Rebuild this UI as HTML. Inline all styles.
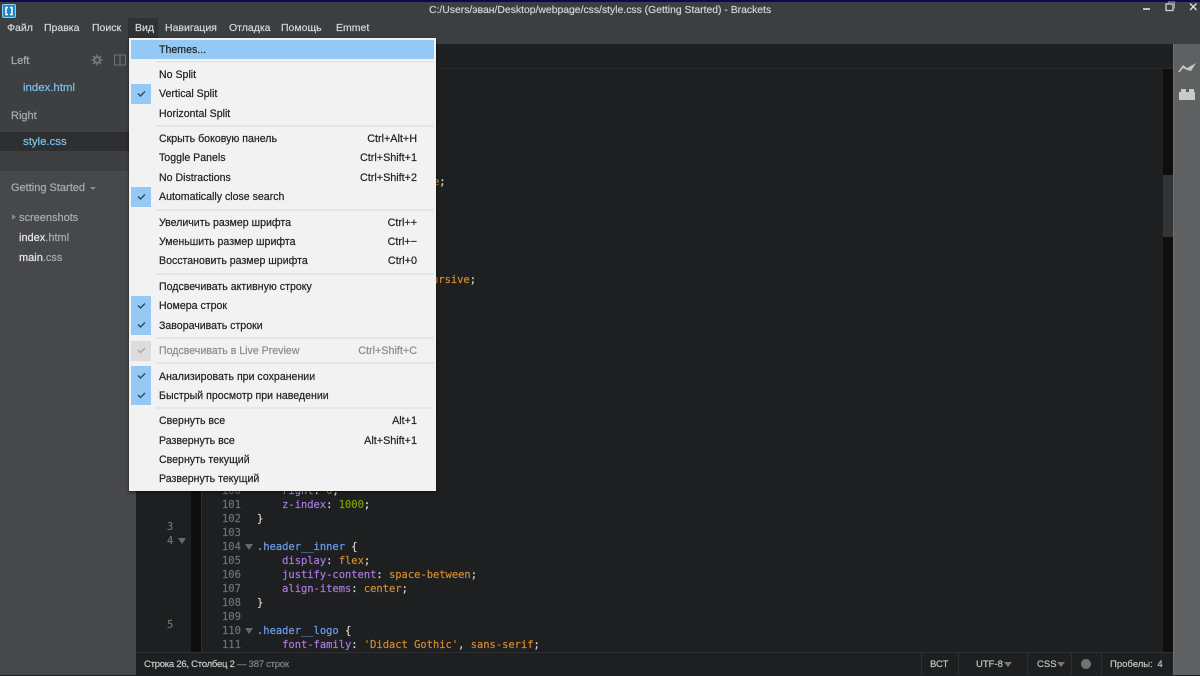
<!DOCTYPE html>
<html><head><meta charset="utf-8"><style>
*{box-sizing:border-box}
html,body{margin:0;padding:0}
body{width:1200px;height:675px;overflow:hidden;position:relative;background:#1d1f21;font-family:"Liberation Sans",sans-serif;font-size:11px}
.a{position:absolute;white-space:nowrap}
.t{position:absolute;white-space:nowrap;line-height:14px;margin-top:1px;-webkit-text-stroke:.2px}
.m{color:#d4d6d6;top:20px;font-size:10.5px}
.s{color:#a9adaf}
.mi{position:absolute;left:159px;color:#222;line-height:14px;white-space:nowrap;font-size:10.6px;margin-top:1px;-webkit-text-stroke:.2px}
.sc{position:absolute;right:783px;color:#222;line-height:14px;white-space:nowrap;font-size:10.8px;margin-top:1px;-webkit-text-stroke:.2px}
.sep{position:absolute;left:156px;width:278px;height:2px;background:#e6e6e6}
.ck{position:absolute;left:131px;width:20px;background:#94c9f6}
.code{position:absolute;font-family:"DejaVu Sans Mono","Liberation Mono",monospace;font-size:10.45px;line-height:14px;white-space:pre;color:#d5d7d6;margin-top:1px;-webkit-text-stroke:.2px}
.n{color:#6f7172}.p{color:#a87bdc}.v{color:#d48a2e}.g{color:#7f9f00}.h{color:#6a9ff0}
.st{position:absolute;top:652px;height:23px;line-height:23px;color:#c9cbcc;font-size:9.5px;white-space:nowrap;margin-top:1px;-webkit-text-stroke:.15px}
.bar{position:absolute;top:652px;width:1px;height:23px;background:#2e2f31}
</style></head><body>
<div class="a" style="left:0;top:0;width:1200px;height:44px;background:#3c3f41"></div>
<div class="a" style="left:0;top:0;width:1200px;height:2px;background:#10084f"></div>
<svg class="a" style="left:2px;top:4px" width="14" height="14" viewBox="0 0 14 14"><rect x="0.5" y="0.5" width="13" height="13" rx="1.5" fill="#1f86c8" stroke="#8fd0f4"/><path d="M6 3.5H4V10.500H6M8 3.5H10V10.500H8" fill="none" stroke="#fff" stroke-width="1.500"/></svg>
<div class="t" style="left:429px;top:3px;color:#d0d2d3;font-size:10.4px">C:/Users/эван/Desktop/webpage/css/style.css (Getting Started) - Brackets</div>
<div class="a" style="left:128px;top:18px;width:30px;height:20px;background:#303235"></div>
<div class="t m" style="left:7px">Файл</div>
<div class="t m" style="left:44px">Правка</div>
<div class="t m" style="left:92px">Поиск</div>
<div class="t m" style="left:135px">Вид</div>
<div class="t m" style="left:165px">Навигация</div>
<div class="t m" style="left:229px">Отладка</div>
<div class="t m" style="left:281px">Помощь</div>
<div class="t m" style="left:336px">Emmet</div>
<svg class="a" style="left:1140px;top:0" width="60" height="14" viewBox="0 0 60 14"><path d="M3 9H10" stroke="#e4e4e4" stroke-width="1.600"/><rect x="26" y="4" width="7" height="6.500" fill="none" stroke="#cfcfcf" stroke-width="1.300"/><path d="M28.500 3.500V2H34.500V8H33.500" fill="none" stroke="#9a9a9a"/><path d="M50 3.500L56.500 10M56.500 3.500L50 10" stroke="#e4e4e4" stroke-width="1.300"/></svg>

<div class="a" style="left:0;top:44px;width:136px;height:631px;background:#47484b"></div>
<div class="a" style="left:0;top:44px;width:136px;height:127px;background:#3d3f41"></div>
<div class="a" style="left:0;top:132px;width:136px;height:19px;background:#2e2f31"></div>
<div class="t s" style="left:11px;top:53px">Left</div>
<div class="t s" style="left:11px;top:108px">Right</div>
<div class="t" style="left:23px;top:80px;color:#78c3ec;font-size:11.4px">index.html</div>
<div class="t" style="left:23px;top:134px;color:#78c3ec;font-size:11.4px">style.css</div>
<svg class="a" style="left:91px;top:54px" width="12" height="12" viewBox="0 0 12 12"><circle cx="6" cy="6" r="2.800" fill="none" stroke="#75787a" stroke-width="2"/><path d="M6 .5V3M6 9V11.500M.5 6H3M9 6H11.500M2 2L3.800 3.800M8.200 8.200L10 10M2 10L3.800 8.200M8.200 3.800L10 2" stroke="#75787a" stroke-width="1.500"/></svg>
<svg class="a" style="left:114px;top:54px" width="12" height="12" viewBox="0 0 12 12"><path d="M.5 1H11.500V11H.5ZM6 1V11" fill="none" stroke="#6f7274"/></svg>
<div class="t s" style="left:11px;top:180px;color:#a9adaf">Getting Started</div>
<div class="a" style="left:90px;top:187px;border:3px solid transparent;border-top:3px solid #8b8e90"></div>
<div class="a" style="left:12px;top:214px;border:3.500px solid transparent;border-left:4px solid #85888a"></div>
<div class="t s" style="left:19px;top:210px">screenshots</div>
<div class="t" style="left:19px;top:230px;color:#e8e9e9">index<span class="s">.html</span></div>
<div class="t" style="left:19px;top:250px;color:#e8e9e9">main<span class="s">.css</span></div>

<div class="a" style="left:136px;top:44px;width:1037px;height:608px;background:#1d1f21"></div>
<div class="a" style="left:136px;top:68px;width:1037px;height:1px;background:#26282a"></div>
<div class="a" style="left:191px;top:69px;width:10px;height:583px;background:#0e0e0e"></div>
<div class="a" style="left:201px;top:69px;width:1px;height:583px;background:#2b2d2f"></div>
<div class="a" style="left:1163px;top:69px;width:10px;height:583px;background:#0e0e0e"></div>
<div class="a" style="left:1163px;top:175px;width:10px;height:62px;background:#333435"></div>
<div class="a" style="left:1173px;top:44px;width:27px;height:631px;background:#5f6061;border-left:1px solid #6e6f70"></div>
<svg class="a" style="left:1177px;top:60px" width="20" height="14" viewBox="0 0 20 14"><path d="M1 12L6 5L10 8L19 3L14 11L10 10L6 8L3 12Z" fill="#c5c6c6"/></svg>
<svg class="a" style="left:1178px;top:87px" width="18" height="14" viewBox="0 0 18 14"><path d="M1 13V5H3V2H8V5H11V2H16V5H17V13Z" fill="#c9caca"/></svg>

<div class="code n" style="left:167px;top:519px">3</div>
<div class="code n" style="left:167px;top:533px">4</div>
<div class="a" style="left:178px;top:538px;border:4px solid transparent;border-top:6px solid #666869;border-bottom:0"></div>
<div class="code n" style="left:167px;top:617px">5</div>

<div class="code n" style="left:222px;top:483px">100</div>
<div class="code" style="left:257px;top:483px">    <span class="p">right</span>: <span class="g">0</span>;</div>
<div class="code n" style="left:222px;top:497px">101</div>
<div class="code" style="left:257px;top:497px">    <span class="p">z-index</span>: <span class="g">1000</span>;</div>
<div class="code n" style="left:222px;top:511px">102</div>
<div class="code" style="left:257px;top:511px">}</div>
<div class="code n" style="left:222px;top:525px">103</div>
<div class="code n" style="left:222px;top:539px">104</div>
<div class="a" style="left:245px;top:544px;border:4px solid transparent;border-top:6px solid #666869;border-bottom:0"></div>
<div class="code" style="left:257px;top:539px"><span class="h">.header__inner</span> {</div>
<div class="code n" style="left:222px;top:553px">105</div>
<div class="code" style="left:257px;top:553px">    <span class="p">display</span>: <span class="v">flex</span>;</div>
<div class="code n" style="left:222px;top:567px">106</div>
<div class="code" style="left:257px;top:567px">    <span class="p">justify-content</span>: <span class="v">space-between</span>;</div>
<div class="code n" style="left:222px;top:581px">107</div>
<div class="code" style="left:257px;top:581px">    <span class="p">align-items</span>: <span class="v">center</span>;</div>
<div class="code n" style="left:222px;top:595px">108</div>
<div class="code" style="left:257px;top:595px">}</div>
<div class="code n" style="left:222px;top:609px">109</div>
<div class="code n" style="left:222px;top:623px">110</div>
<div class="a" style="left:245px;top:628px;border:4px solid transparent;border-top:6px solid #666869;border-bottom:0"></div>
<div class="code" style="left:257px;top:623px"><span class="h">.header__logo</span> {</div>
<div class="code n" style="left:222px;top:637px">111</div>
<div class="code" style="left:257px;top:637px">    <span class="p">font-family</span>: <span class="v">'Didact Gothic'</span>, <span class="v">sans-serif</span>;</div>
<div class="code" style="left:433px;top:174px"><span class="v">e</span>;</div>
<div class="code" style="left:432px;top:272px"><span class="v">ursive</span>;</div>

<div class="a" style="left:136px;top:652px;width:1037px;height:23px;background:#1d1f21;border-top:1px solid #2e2f31"></div>
<div class="st" style="left:144px;color:#d0d2d3;letter-spacing:-.25px">Строка 26, Столбец 2 <span style="color:#86888a">— 387 строк</span></div>
<div class="bar" style="left:921px"></div><div class="bar" style="left:958px"></div><div class="bar" style="left:1027px"></div><div class="bar" style="left:1071px"></div><div class="bar" style="left:1101px"></div>
<div class="st" style="left:930px">ВСТ</div>
<div class="st" style="left:976px">UTF-8</div>
<div class="a" style="left:1004px;top:662px;border:4px solid transparent;border-top:5px solid #777;border-bottom:0"></div>
<div class="st" style="left:1037px">CSS</div>
<div class="a" style="left:1057px;top:662px;border:4px solid transparent;border-top:5px solid #777;border-bottom:0"></div>
<div class="a" style="left:1081px;top:659px;width:10px;height:10px;border-radius:50%;background:#737475"></div>
<div class="st" style="left:1110px;word-spacing:2px">Пробелы: 4</div>

<div class="a" style="left:129px;top:38px;width:307px;height:453px;background:#f2f2f2;box-shadow:0 1px 3px rgba(0,0,0,.6)"></div>
<div class="a" style="left:131px;top:40px;width:303px;height:19px;background:#94c9f6"></div>
<div class="ck" style="top:84px;height:20px"></div>
<div class="ck" style="top:187px;height:20px"></div>
<div class="ck" style="top:296px;height:39px"></div>
<div class="ck" style="top:341px;height:20px;background:#dcdcdc"></div>
<div class="ck" style="top:366px;height:39px"></div>
<svg class="a" style="left:131px;top:84px" width="20" height="320" viewBox="0 0 20 320"><g fill="none" stroke="#2f4d66" stroke-width="1.500"><path d="M7 9.500L9.500 12L14 7.500"/><path d="M7 112.500L9.500 115L14 110.500"/><path d="M7 221.500L9.500 224L14 219.500"/><path d="M7 240.500L9.500 243L14 238.500"/><path d="M7 291.500L9.500 294L14 289.500"/><path d="M7 311L9.500 313.500L14 309"/><path d="M7 266L9.500 268.500L14 264" stroke="#a9a9a9"/></g></svg>
<div class="sep" style="top:61px"></div><div class="sep" style="top:125px"></div><div class="sep" style="top:209px"></div><div class="sep" style="top:273px"></div><div class="sep" style="top:337px"></div><div class="sep" style="top:362px"></div><div class="sep" style="top:407px"></div>
<div class="mi" style="top:42px">Themes...</div>
<div class="mi" style="top:67px">No Split</div>
<div class="mi" style="top:86px">Vertical Split</div>
<div class="mi" style="top:106px">Horizontal Split</div>
<div class="mi" style="top:131px">Скрыть боковую панель</div><div class="sc" style="top:131px">Ctrl+Alt+H</div>
<div class="mi" style="top:150px">Toggle Panels</div><div class="sc" style="top:150px">Ctrl+Shift+1</div>
<div class="mi" style="top:170px">No Distractions</div><div class="sc" style="top:170px">Ctrl+Shift+2</div>
<div class="mi" style="top:189px">Automatically close search</div>
<div class="mi" style="top:215px">Увеличить размер шрифта</div><div class="sc" style="top:215px">Ctrl++</div>
<div class="mi" style="top:234px">Уменьшить размер шрифта</div><div class="sc" style="top:234px">Ctrl+−</div>
<div class="mi" style="top:253px">Восстановить размер шрифта</div><div class="sc" style="top:253px">Ctrl+0</div>
<div class="mi" style="top:279px">Подсвечивать активную строку</div>
<div class="mi" style="top:298px">Номера строк</div>
<div class="mi" style="top:318px">Заворачивать строки</div>
<div class="mi" style="top:343px;color:#8b8b8b">Подсвечивать в Live Preview</div><div class="sc" style="top:343px;color:#8b8b8b">Ctrl+Shift+C</div>
<div class="mi" style="top:369px">Анализировать при сохранении</div>
<div class="mi" style="top:388px">Быстрый просмотр при наведении</div>
<div class="mi" style="top:413px">Свернуть все</div><div class="sc" style="top:413px">Alt+1</div>
<div class="mi" style="top:433px">Развернуть все</div><div class="sc" style="top:433px">Alt+Shift+1</div>
<div class="mi" style="top:452px">Свернуть текущий</div>
<div class="mi" style="top:471px">Развернуть текущий</div>
</body></html>
